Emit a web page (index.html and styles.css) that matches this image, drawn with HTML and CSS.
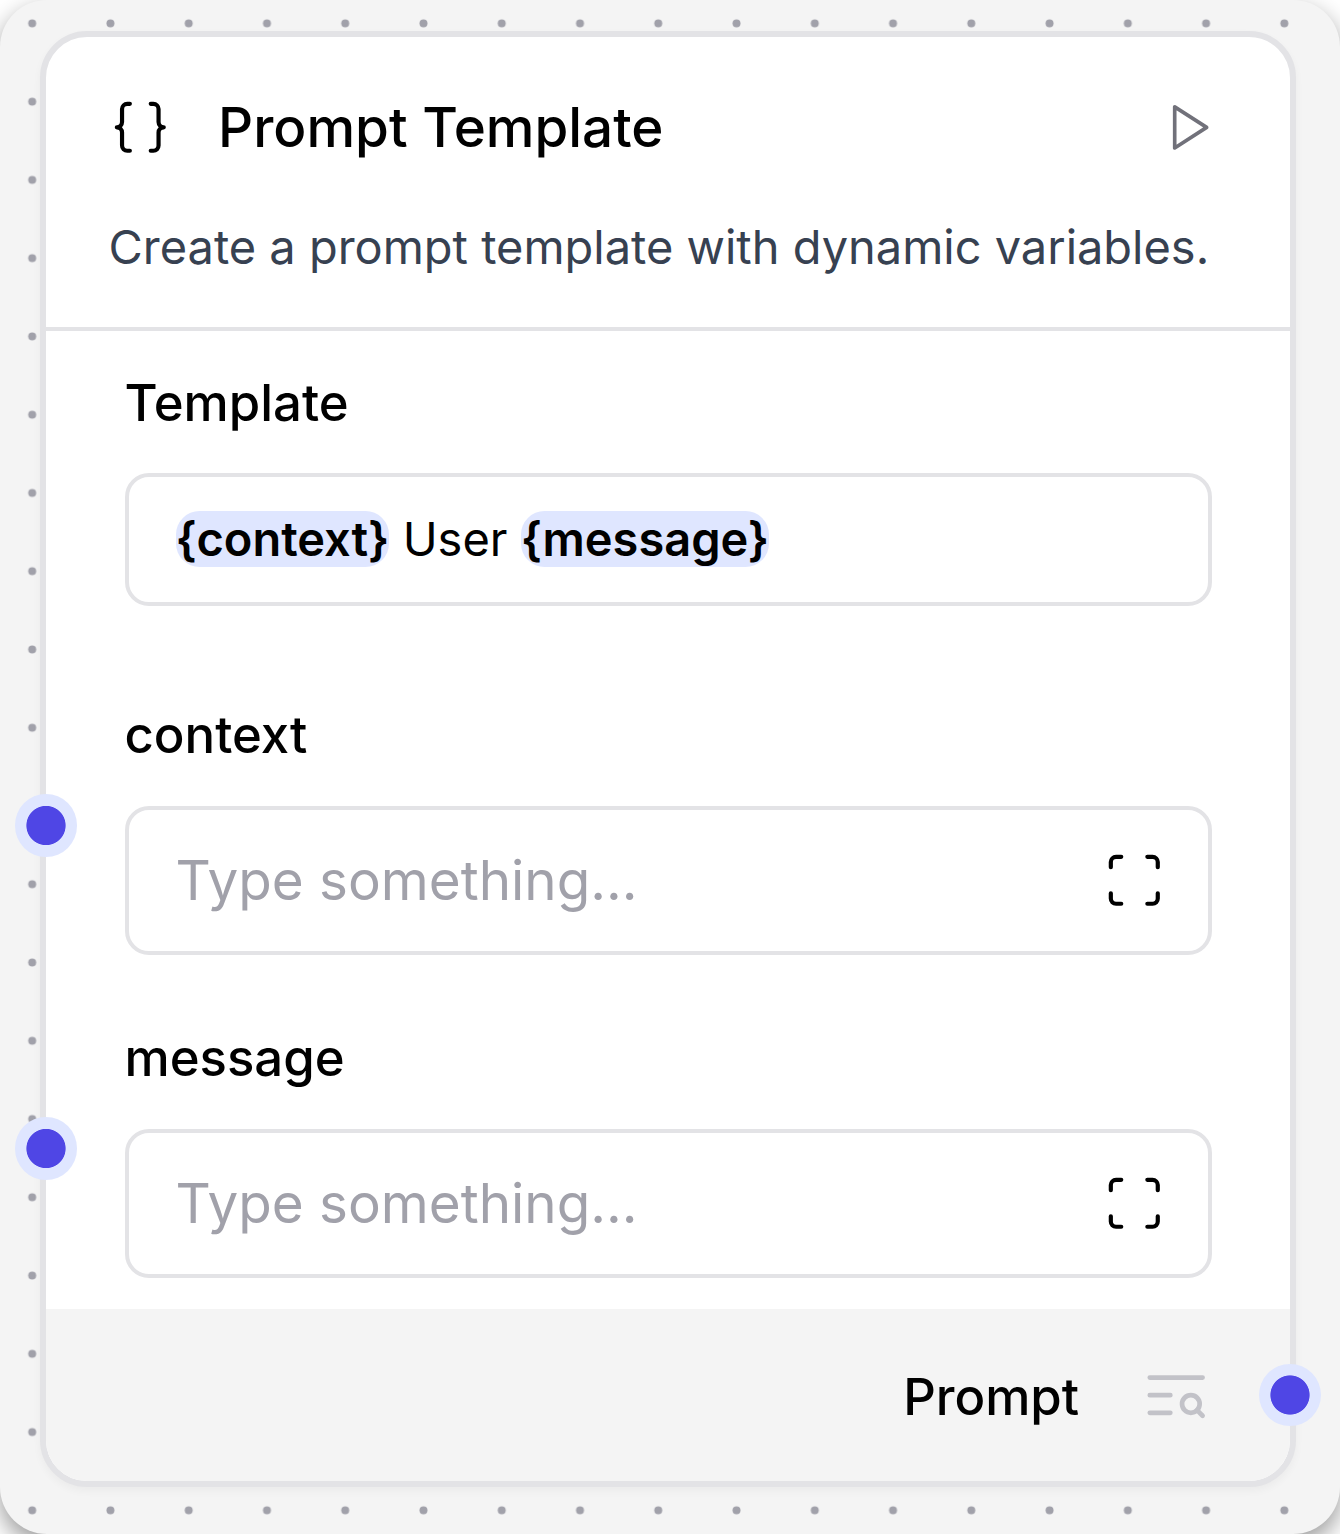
FILE: index.html
```html
<!DOCTYPE html>
<html lang="en">
<head>
<meta charset="utf-8">
<title>Prompt Template</title>
<link rel="stylesheet" href="styles.css">
</head>
<body>
<main class="canvas">
  <svg class="dots" width="1340" height="1534" aria-hidden="true">
    <defs>
      <pattern id="grid" x="-6.93" y="-15.73" width="78.26" height="78.26" patternUnits="userSpaceOnUse">
        <circle cx="39.13" cy="39.13" r="4" fill="#a1a1aa"/>
      </pattern>
    </defs>
    <rect width="1340" height="1534" fill="url(#grid)"/>
  </svg>
  <article class="node">
    <header class="node-header">
      <div class="title-row">
        <svg class="icon-braces" viewBox="0 0 24 24"><path d="M8 3H7a2 2 0 0 0-2 2v5a2 2 0 0 1-2 2 2 2 0 0 1 2 2v5c0 1.1.9 2 2 2h1"/><path d="M16 21h1a2 2 0 0 0 2-2v-5c0-1.1.9-2 2-2a2 2 0 0 1-2-2V5a2 2 0 0 0-2-2h-1"/></svg>
        <h1 class="title">Prompt Template</h1>
        <svg class="icon-play" viewBox="0 0 24 24"><path d="M6 3l14 9-14 9z"/></svg>
      </div>
      <p class="description">Create a prompt template with dynamic variables.</p>
    </header>
    <section class="fields">
      <div class="field field-template">
        <div class="label">Template</div>
        <div class="input input-template"><span class="variable">{context}</span> User <span class="variable">{message}</span></div>
      </div>
      <div class="field">
        <div class="label">context</div>
        <div class="input">
          <span class="placeholder">Type something...</span>
          <svg class="icon-expand" viewBox="0 0 24 24"><path d="M3 7V5a2 2 0 0 1 2-2h2M17 3h2a2 2 0 0 1 2 2v2M21 17v2a2 2 0 0 1-2 2h-2M7 21H5a2 2 0 0 1-2-2v-2"/></svg>
        </div>
        <span class="handle handle-in"></span>
      </div>
      <div class="field">
        <div class="label">message</div>
        <div class="input">
          <span class="placeholder">Type something...</span>
          <svg class="icon-expand" viewBox="0 0 24 24"><path d="M3 7V5a2 2 0 0 1 2-2h2M17 3h2a2 2 0 0 1 2 2v2M21 17v2a2 2 0 0 1-2 2h-2M7 21H5a2 2 0 0 1-2-2v-2"/></svg>
        </div>
        <span class="handle handle-in"></span>
      </div>
    </section>
    <footer class="node-footer">
      <span class="output">Prompt</span>
      <svg class="icon-inspect" viewBox="0 0 24 24"><path d="M21 6H3M10 12H3M10 18H3"/><circle cx="17" cy="15" r="3"/><path d="m21 19-1.9-1.9"/></svg>
      <span class="handle handle-out"></span>
    </footer>
  </article>
</main>
</body>
</html>
```
FILE: styles.css
```css
* { box-sizing: border-box; }
body {
  margin: 0;
  background: #fff;
  font-family: Inter, "Liberation Sans", sans-serif;
  color: #000;
  overflow: hidden;
}
.canvas {
  position: relative;
  width: 1340px;
  height: 1534px;
  padding: 31px 44px 47px 40px;
  border-radius: 47px;
  background: #f4f4f4;
  box-shadow: 0 10px 24px rgba(0, 0, 0, .4);
}
.dots { position: absolute; inset: 0; }
.node {
  position: relative;
  height: 1456px;
  display: flex;
  flex-direction: column;
  border: 6px solid #e3e3e6;
  border-radius: 47px;
  background: #fff;
  box-shadow: 0 4px 8px rgba(0, 0, 0, .04);
}
svg path { stroke-linecap: round; stroke-linejoin: round; }
.icon-braces, .icon-play, .icon-expand, .icon-inspect {
  display: block;
  flex: none;
  fill: none;
  stroke: #000;
  stroke-width: 1.6;
}
.node-header {
  height: 294px;
  padding: 50px 74px 0 62.5px;
  border-bottom: 4px solid #e3e3e6;
}
.title-row { display: flex; align-items: center; height: 81px; }
.icon-braces { width: 62.6px; height: 62.6px; }
.title {
  flex: 1;
  margin: 0 0 0 47px;
  padding-bottom: 2px;
  font-size: 54.78px;
  line-height: 80px;
  font-weight: 500;
}
.icon-play { width: 54.8px; height: 54.8px; stroke: #71717a; }
.description {
  margin: 44px 0 0;
  font-size: 46.96px;
  line-height: 70px;
  color: #374151;
  white-space: nowrap;
}
.fields { height: 978px; padding: 42px 78px 0 78.5px; }
.field { position: relative; height: 323px; }
.field-template { height: 332px; }
.label {
  height: 101px;
  font-size: 50.87px;
  line-height: 60px;
  font-weight: 500;
}
.field-template .label { height: 100px; }
.input {
  display: flex;
  align-items: center;
  justify-content: space-between;
  height: 149px;
  padding: 0 47px;
  border: 4px solid #e3e3e6;
  border-radius: 24px;
  background: #fff;
}
.input-template {
  display: block;
  height: 133px;
  font-size: 46.96px;
  line-height: 125px;
  white-space: pre;
}
.variable {
  border-radius: 23.5px;
  background: #dfe6ff;
  font-weight: 600;
}
.placeholder {
  padding-bottom: 2px;
  font-size: 54.78px;
  line-height: 66px;
  color: #a1a1aa;
}
.icon-expand { width: 62.6px; height: 62.6px; margin-right: -4.5px; }
.node-footer {
  position: relative;
  height: 172px;
  display: flex;
  align-items: center;
  justify-content: flex-end;
  gap: 62px;
  padding-right: 78.5px;
  border-radius: 0 0 41px 41px;
  background: #f4f4f4;
}
.output {
  padding-top: 4px;
  font-size: 50.87px;
  line-height: 62px;
  font-weight: 500;
}
.icon-inspect { width: 70.4px; height: 70.4px; stroke: #c2c2c8; }
.handle {
  position: absolute;
  width: 62.6px;
  height: 62.6px;
  border-radius: 50%;
  background: radial-gradient(circle, #4f46e5 19.2px, #dfe6ff 20px);
}
.handle-in { left: -109.8px; top: 89.2px; }
.handle-out { right: -31.3px; top: 54.7px; }
```
